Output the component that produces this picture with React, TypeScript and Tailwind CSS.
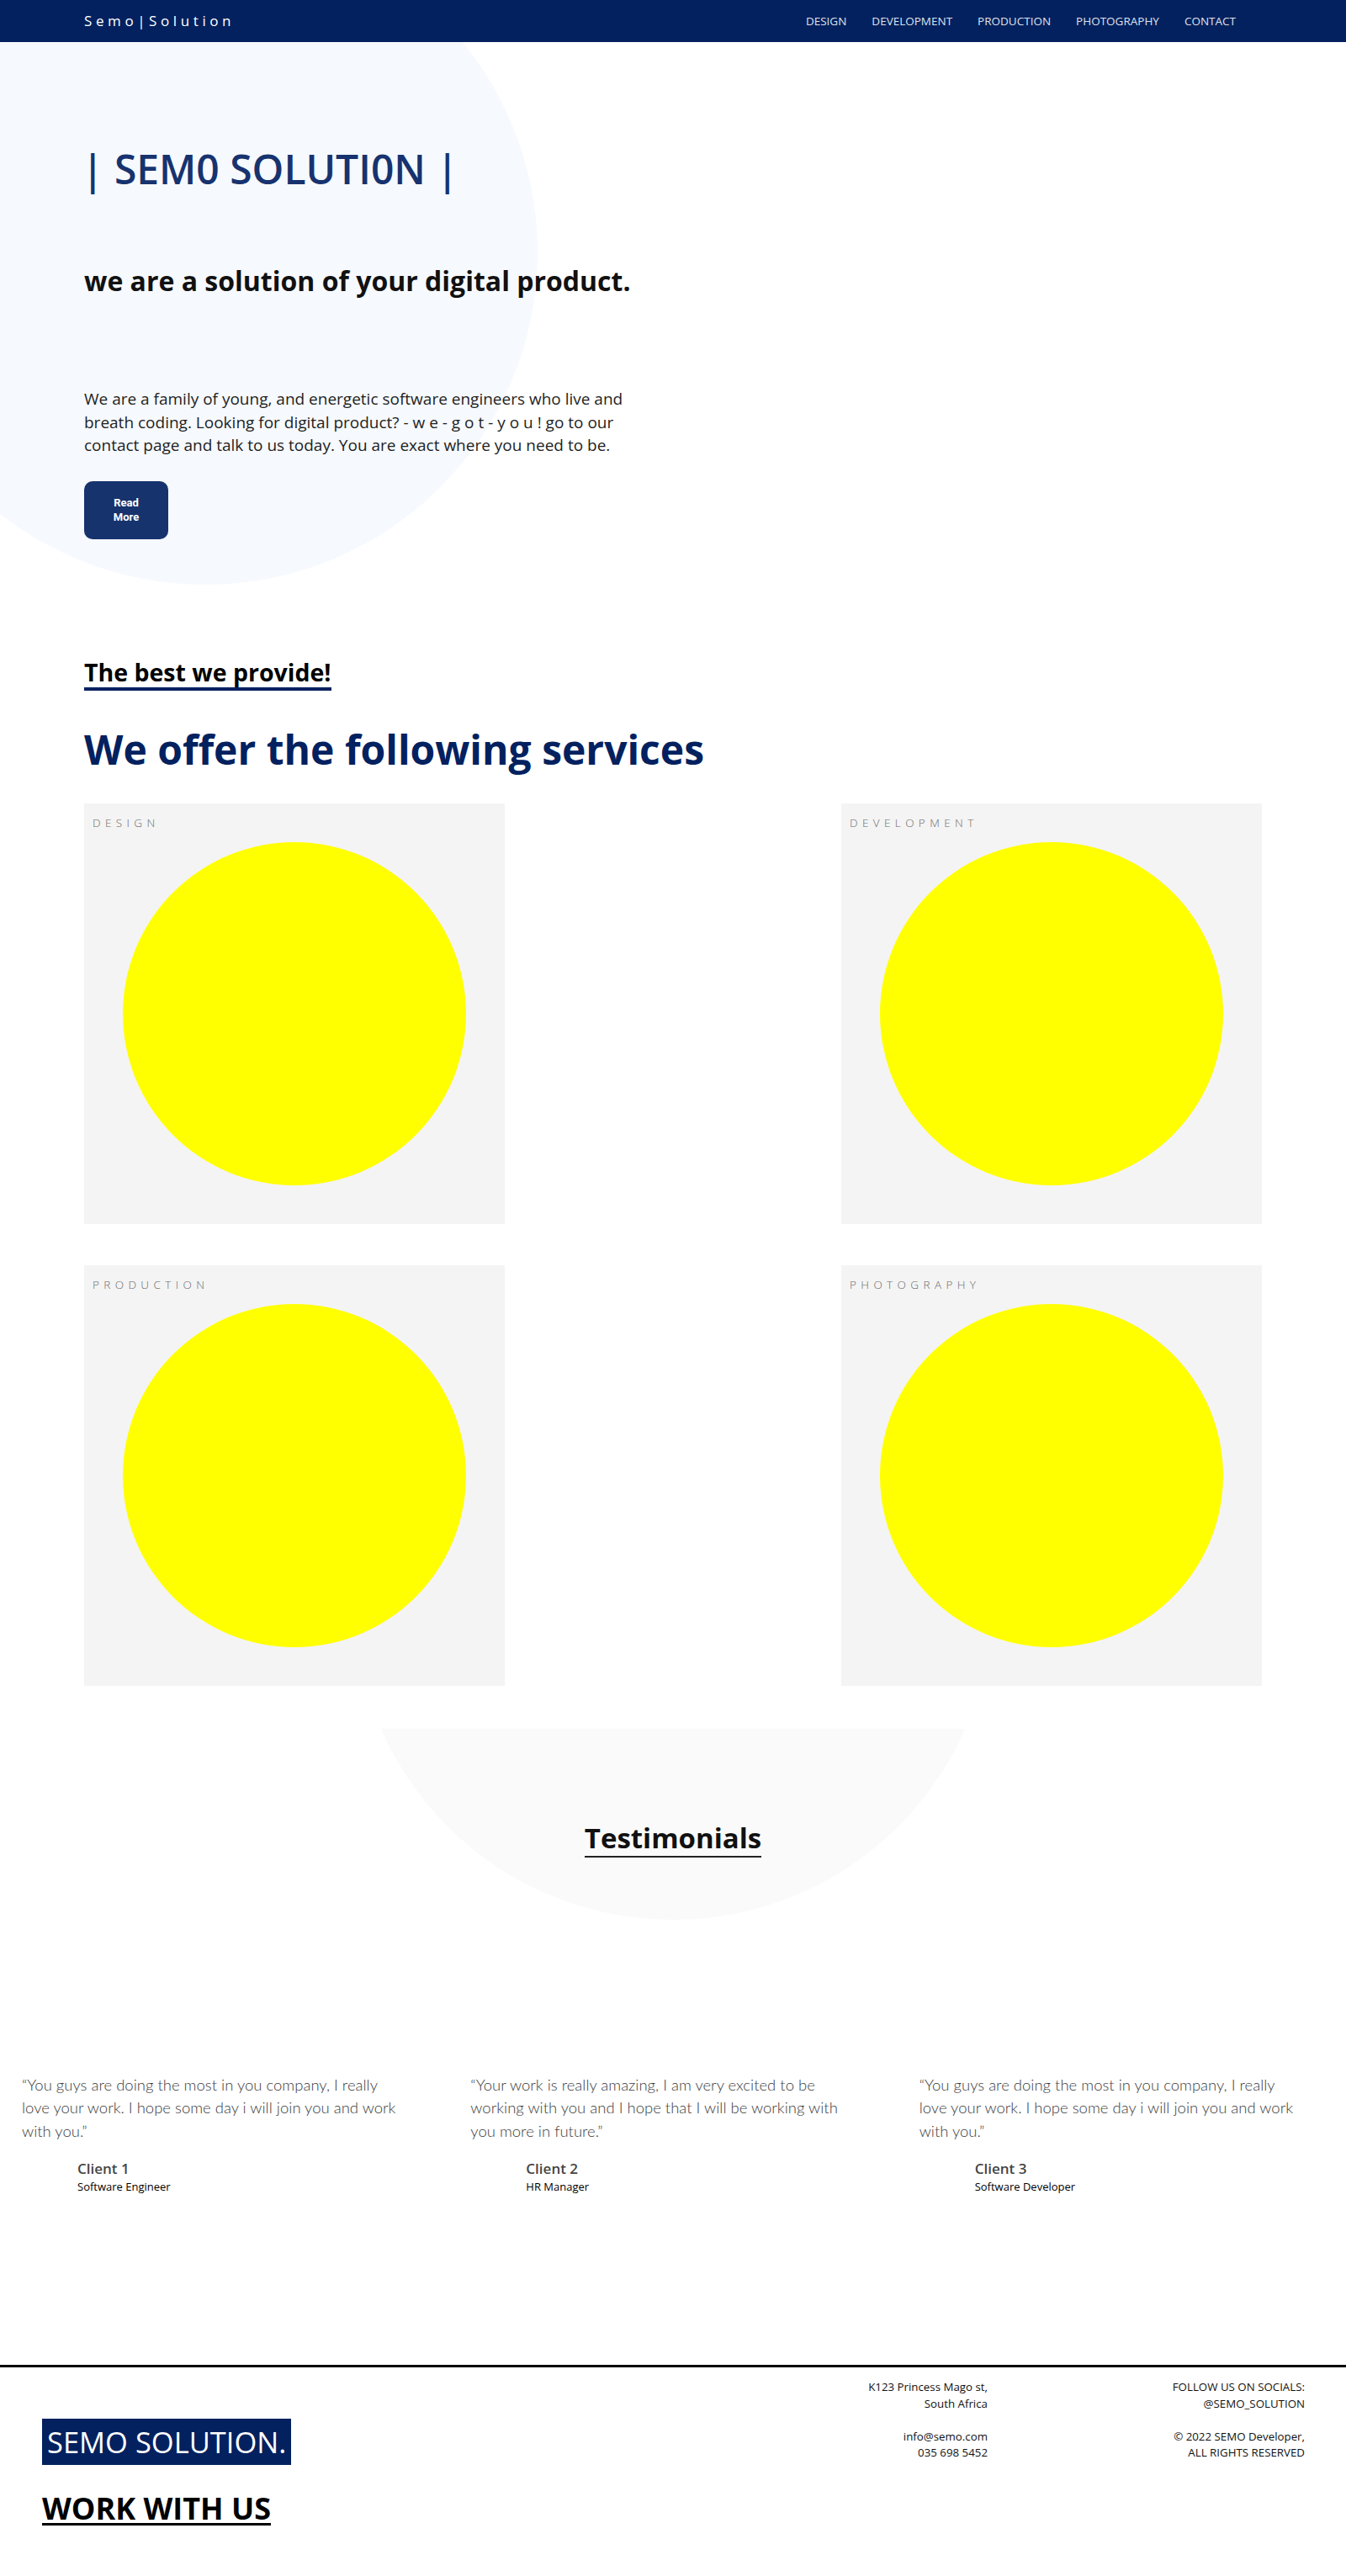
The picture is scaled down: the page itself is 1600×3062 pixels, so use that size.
const navLinks = ["DESIGN", "DEVELOPMENT", "PRODUCTION", "PHOTOGRAPHY", "CONTACT"];
const services = ["DESIGN", "DEVELOPMENT", "PRODUCTION", "PHOTOGRAPHY"];

const testimonials = [
  {
    lines: [
      "\u201CYou guys are doing the most in you company, I really",
      "love your work. I hope some day i will join you and work",
      "with you.\u201D",
    ],
    name: "Client 1",
    role: "Software Engineer",
  },
  {
    lines: [
      "\u201CYour work is really amazing, I am very excited to be",
      "working with you and I hope that I will be working with",
      "you more in future.\u201D",
    ],
    name: "Client 2",
    role: "HR Manager",
  },
  {
    lines: [
      "\u201CYou guys are doing the most in you company, I really",
      "love your work. I hope some day i will join you and work",
      "with you.\u201D",
    ],
    name: "Client 3",
    role: "Software Developer",
  },
];

export default function App() {
  return (
    <div className="w-full min-h-[3062px] bg-white overflow-hidden font-['Open_Sans',sans-serif] text-[#111]">
      {/* NAV */}
      <nav className="relative z-10 h-[50px] bg-[#03215f] flex items-center justify-between pl-[100px] pr-[131px]">
        <span className="text-white text-[17px] tracking-[0.27em] font-normal">Semo|Solution</span>
        <ul className="flex gap-[30px] text-[13.5px] text-[#dfe3ec]">
          {navLinks.map((l) => (
            <li key={l}>{l}</li>
          ))}
        </ul>
      </nav>

      {/* HERO */}
      <section className="relative">
        <div className="absolute left-[-151px] top-[-145px] w-[790px] h-[790px] rounded-full bg-[#f6f9fd]" />
        <div className="relative pl-[100px] pt-[122px]">
          <h1 className="ml-[-3px] text-[48px] leading-[58px] font-semibold text-[#17336f]">| SEM0 SOLUTI0N |</h1>
          <h2 className="mt-[84px] text-[32px] leading-[40px] font-bold text-[#111]">
            we are a solution of your digital product.
          </h2>
          <p className="mt-[107px] text-[19px] leading-[27.5px] text-[#1f1f1f] whitespace-nowrap">
            We are a family of young, and energetic software engineers who live and
            <br />
            breath coding. Looking for digital product? - w e - g o t - y o u ! go to our
            <br />
            contact page and talk to us today. You are exact where you need to be.
          </p>
          <button className="mt-[28px] w-[100px] h-[69px] rounded-[10px] bg-[#16336e] text-white font-['Roboto',sans-serif] font-bold text-[13px] leading-[17px] flex items-center justify-center text-center">
            Read
            <br />
            More
          </button>
        </div>
      </section>

      {/* SERVICES */}
      <section className="px-[100px]">
        <h3 className="mt-[140px] inline-block text-[28.5px] leading-[36px] font-bold text-black border-b-4 border-[#03215f]">
          The best we provide!
        </h3>
        <h2 className="mt-[40px] text-[48px] leading-[60px] font-bold text-[#03215f]">We offer the following services</h2>
        <div className="mt-[34px] grid grid-cols-[500px_500px] justify-between gap-y-[49px]">
          {services.map((s) => (
            <div key={s} className="relative h-[500px] bg-[#f4f4f4] flex items-center justify-center">
              <span className="absolute left-[10px] top-[14px] text-[13.5px] leading-[18px] tracking-[0.4em] text-[#6a6a6a] font-light">
                {s}
              </span>
              <div className="w-[408px] h-[408px] rounded-full bg-[#ffff00]" />
            </div>
          ))}
        </div>
      </section>

      {/* TESTIMONIALS */}
      <section className="relative mt-[51px] h-[260px] overflow-hidden">
        <div className="absolute left-1/2 -translate-x-1/2 top-[-531px] w-[758px] h-[758px] rounded-full bg-[#fafafa]" />
        <div className="relative pt-[109px] text-center">
          <h2 className="inline-block text-[33px] leading-[42px] font-bold text-[#111] border-b-2 border-[#222]">
            Testimonials
          </h2>
        </div>
      </section>

      <div className="grid grid-cols-3 pt-[150px]">
        {testimonials.map((t) => (
          <div key={t.name} className="px-[26px]">
            <p className="font-['Lato',sans-serif] font-light text-[18.5px] leading-[27.5px] text-[#3c3c3c] whitespace-nowrap">
              {t.lines[0]}
              <br />
              {t.lines[1]}
              <br />
              {t.lines[2]}
            </p>
            <div className="pl-[66px] mt-[20px]">
              <div className="text-[17px] leading-[22px] font-semibold text-[#444]">{t.name}</div>
              <div className="mt-[1px] text-[13px] leading-[18px] text-black">{t.role}</div>
            </div>
          </div>
        ))}
      </div>

      {/* FOOTER */}
      <footer className="mt-[203px] border-t-[3px] border-black flex pr-[49px] pb-[57px]">
        <div className="flex-1 pl-[50px] pt-[61px]">
          <div className="inline-block bg-[#03215f] text-white text-[34.5px] leading-[55px] px-[6px]">SEMO SOLUTION.</div>
          <div className="mt-[30px] text-[36px] leading-[44px] font-bold text-black underline decoration-[3px] underline-offset-[4px]">
            WORK WITH US
          </div>
        </div>
        <div className="w-[300px] pt-[14px] text-right text-[13.3px] leading-[19.5px] text-[#111]">
          <p>K123 Princess Mago st,</p>
          <p>South Africa</p>
          <p className="mt-[19.5px]">info@semo.com</p>
          <p>035 698 5452</p>
        </div>
        <div className="w-[377px] pt-[14px] text-right text-[13.3px] leading-[19.5px] text-[#111]">
          <p>FOLLOW US ON SOCIALS:</p>
          <p>@SEMO_SOLUTION</p>
          <p className="mt-[19.5px]">&copy; 2022 SEMO Developer,</p>
          <p>ALL RIGHTS RESERVED</p>
        </div>
      </footer>
    </div>
  );
}
